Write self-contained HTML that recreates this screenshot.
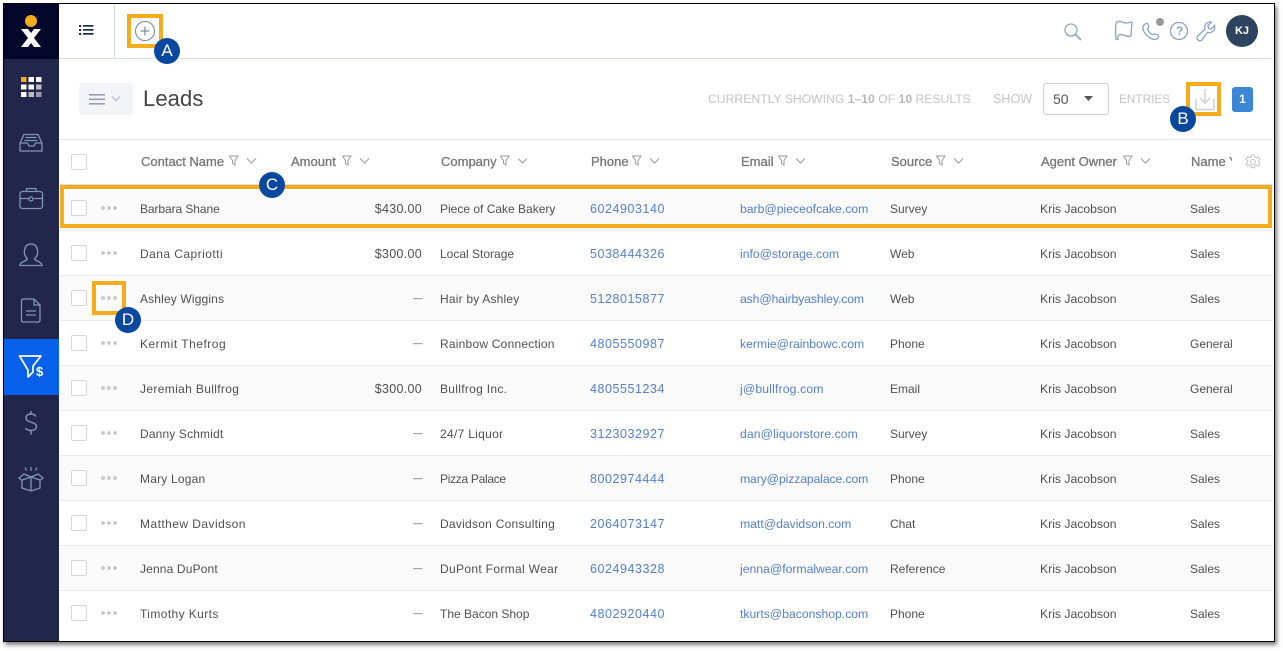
<!DOCTYPE html>
<html><head><meta charset="utf-8"><style>
html,body{margin:0;padding:0;background:#fff;width:1283px;height:651px;overflow:hidden}
body{position:relative;font-family:"Liberation Sans",sans-serif;color:#444}
div,span,svg{position:absolute}
#frame{left:3px;top:3px;width:1270px;height:637px;border:1px solid #000;box-shadow:2px 3px 4px rgba(0,0,0,.5);background:#fff;box-sizing:content-box}
.r{left:0;width:1283px;height:16px}
.r span{font-size:12px;white-space:nowrap;line-height:16px;color:#505050;top:0}
.r .n{left:140px}
.r .m{right:861px;font-size:12.500px;letter-spacing:.3px}
.r .d{left:413px;font-size:9.500px;color:#555}
.r .c{left:440px}
.r .p{left:590px;color:#5480cc;font-size:12.500px;letter-spacing:.55px}
.r .e{left:740px;color:#5480cc;font-size:12.200px}
.r .s{left:890px}
.r .o{left:1040px;font-size:12.200px}
.r .k{left:1190px}
.h{font-size:13px;color:#777;-webkit-text-stroke:.3px #777;white-space:nowrap;line-height:16px;top:154px}
.cb{width:14px;height:14px;border:1px solid #d6d6d6;border-radius:2px;background:#fff;left:71px}
.dots{left:101px;width:16px;height:4px;background:radial-gradient(circle at 2px 2px,#cacaca 1.800px,transparent 2px) 0 0/6px 4px repeat-x}
.row{left:59px;width:1214px;height:44px;border-bottom:1px solid #ebebeb}
.g{background:#fafafa}
.badge{width:26px;height:26px;border-radius:50%;background:#0a479f;color:#fff;font-size:17px;line-height:26px;text-align:center}
.y{border:4px solid #f4ab1c;box-sizing:border-box}
.mut{color:#c4c4c4;white-space:nowrap;line-height:16px}
.fl{top:155px;width:30px;height:12px}
</style></head><body>
<div id="frame"></div>
<!-- sidebar -->
<div style="left:4px;top:4px;width:55px;height:637px;background:#22264a"></div>
<div style="left:4px;top:4px;width:55px;height:55px;background:#03052b"></div>
<div style="left:4px;top:339px;width:55px;height:56px;background:#0760ea"></div>
<svg style="left:4px;top:4px" width="55" height="637" viewBox="4 4 55 637" fill="none">
<circle cx="31" cy="21" r="6" fill="#f4ab1c"/>
<path d="M21 29h7l3 4 3-4h7l-7 9 7 9h-7l-3-4-3 4h-7l7-9z" fill="#fff"/>
<g>
<rect x="21" y="77" width="5.500" height="5" fill="#f4ab1c"/><rect x="28.500" y="77" width="5.500" height="5" fill="#fff"/><rect x="36" y="77" width="5.500" height="5" fill="#fff"/>
<rect x="21" y="84.500" width="5.500" height="5" fill="#fff"/><rect x="28.500" y="84.500" width="5.500" height="5" fill="#fff"/><rect x="36" y="84.500" width="5.500" height="5" fill="#bdbdc8"/>
<rect x="21" y="92" width="5.500" height="5" fill="#fff"/><rect x="28.500" y="92" width="5.500" height="5" fill="#bdbdc8"/><rect x="36" y="92" width="5.500" height="5" fill="#9a9aa8"/>
</g>
<g stroke="#7f95b8" stroke-width="1.300">
<path d="M20 143l4-8.500h14l4 8.500v8H20zM20 143h7.500l1.500 3h5l1.500-3H42"/><path d="M25.500 137.500h11M24.500 140.500h13"/>
<rect x="20" y="191.500" width="22.500" height="17" rx="2.500"/><path d="M26.500 191.500v-3h9.500v3M20 198.500h8.500M34 198.500h8.500"/><circle cx="31" cy="199" r="2"/>
<path d="M20 265.500c0-4 6-4 7.500-6.500-3-3-3.500-6-3-9 .7-4 3-6 6.500-6s5.800 2 6.500 6c.5 3 0 6-3 9 1.500 2.500 7.500 2.500 7.500 6.500z"/>
<path d="M23 299h11l6 6v15.500a1.500 1.500 0 0 1-1.500 1.500h-15.500a1.500 1.500 0 0 1-1.500-1.500v-20a1.500 1.500 0 0 1 1.500-1.500zM34 299v6h6M26 311h10M26 315h10"/>
<path d="M36 416.500c-1-1.500-3-2.500-5-2.500-3 0-5 1.500-5 4s2 3.500 5 4.200 5.500 1.800 5.500 4.300-2.500 4-5.500 4c-2.300 0-4.500-1-5.500-2.500M31 411v3M31 431v3.500" stroke-width="1.500"/>
<path d="M24 474l7 3 7-3 5 4-3 2.500v7.500l-9 3-9-3v-7.500l-3-2.500zM31 477v13.500M22 480l9-3 9 3M25 467.500l1.500 3M31 467v4M37 467.500l-1.500 3"/>
</g>
<path d="M19.500 356h21.500l-8 10v6l-5 5v-7z" stroke="#fff" stroke-width="1.700" stroke-linejoin="round"/>
</svg>
<span style="left:36px;top:365px;font-size:13px;font-weight:bold;color:#fff;line-height:14px">$</span>
<!-- top bar -->
<div style="left:59px;top:58px;width:1214px;height:1px;background:#d5dfec"></div>
<div style="left:114px;top:4px;width:1px;height:55px;background:#d5dfec"></div>
<svg style="left:79px;top:24px" width="16" height="12" fill="#1f2a4a"><rect x="0" y="1" width="2.200" height="2"/><rect x="0" y="5" width="2.200" height="2"/><rect x="0" y="9" width="2.200" height="2"/><rect x="4" y="1" width="10.500" height="1.700"/><rect x="4" y="5" width="10.500" height="1.700"/><rect x="4" y="9" width="10.500" height="1.700"/></svg>
<div class="y" style="left:127px;top:14px;width:36px;height:34px"></div>
<svg style="left:134px;top:20px" width="22" height="22" fill="none" stroke="#7a8aa5" stroke-width="1.100"><circle cx="11" cy="11" r="9.500"/><path d="M11 6.500v9M6.500 11h9" stroke-width="1.300"/></svg>
<div class="badge" style="left:154px;top:38px">A</div>
<svg style="left:1060px;top:18px" width="210" height="30" fill="none" stroke="#8ca4c4" stroke-width="1.300">
<circle cx="11" cy="12" r="6"/><path d="M15.500 16.500l5.500 5.500" stroke-width="1.700"/>
<path d="M57 4c4-2 5 1 9 1 2.500 0 5-1 6-1l-1 14c-3 1-5 0-8-1-2-.7-4-.5-5 1v3.500h-2c-.5-5.500-.5-12 0-16z"/>
<path transform="translate(-18 0)" d="M103 6c2-1.500 3-.5 3.500 1.500.5 1.500 0 2.500-1 3.300.8 2.700 3 4.900 5.500 6 1-.8 2-1.200 3.500-.5 1.800.8 3 2 1.500 3.700-2 2-4.500 2-7.500.2-3.500-2-6.500-5.500-7.500-9-.5-2 .2-3.700 2-5.200z"/>
<circle cx="119" cy="13" r="8.500"/>
<path transform="translate(-5 0)" d="M147 22c-1.500 1-3.500 1-4.500-.5-.7-1.500-.5-3 .8-4l6.700-6.500c-.7-3 .5-5.500 3-6.700 1.200-.5 2.500-.5 3.500-.2l-3.500 3.300.5 3 3 .5 3-3.500c.7 2.200 0 4.500-1.700 6-1.700 1.300-3.500 1.700-5.300 1z"/>
</svg>
<span style="left:1176px;top:23px;font-size:12px;font-weight:bold;color:#8ca4c4;line-height:16px">?</span>
<div style="left:1156px;top:18px;width:8px;height:8px;border-radius:50%;background:#9a9a9a"></div>
<div style="left:1226px;top:15px;width:32px;height:32px;border-radius:50%;background:#2e435f;color:#fff;font-size:11px;font-weight:bold;line-height:32px;text-align:center">KJ</div>
<!-- toolbar -->
<div style="left:79px;top:83px;width:54px;height:32px;border-radius:4px;background:#f2f4f8"></div>
<svg style="left:89px;top:92px" width="36" height="14"><path d="M0 2h16v1.600H0zM0 6.500h16v1.600H0zM0 11h16v1.600H0z" fill="#9a9db2"/><path d="M23 4.500l4 4 4-4" stroke="#c8ccd8" stroke-width="2" fill="none"/></svg>
<span style="left:143px;top:85px;font-size:22px;line-height:28px;color:#444;letter-spacing:.1px">Leads</span>
<span class="mut" style="left:708px;top:91px;font-size:12.200px">CURRENTLY SHOWING <b style="position:static;color:#b9b9b9">1–10</b> OF <b style="position:static;color:#b9b9b9">10</b> RESULTS</span>
<span class="mut" style="left:993px;top:91px;font-size:12.600px">SHOW</span>
<div style="left:1043px;top:83px;width:64px;height:30px;border:1px solid #cfcfcf;border-radius:3px;background:#fff"></div>
<span style="left:1053px;top:91px;font-size:14px;color:#555;line-height:16px">50</span>
<svg style="left:1084px;top:96px" width="10" height="6"><path d="M0 0h9L4.500 5z" fill="#555"/></svg>
<span class="mut" style="left:1119px;top:91px;font-size:11.800px">ENTRIES</span>
<div class="y" style="left:1186px;top:82px;width:35px;height:34px"></div>
<svg style="left:1194px;top:87px" width="22" height="25" fill="none" stroke="#cfcfcf" stroke-width="1.500"><path d="M11 2v14M6 11l5 5 5-5"/><path d="M2 12v9.500a1 1 0 0 0 1 1h16a1 1 0 0 0 1-1V12"/></svg>
<div class="badge" style="left:1170px;top:106px">B</div>
<div style="left:1232px;top:87px;width:21px;height:25px;border-radius:3px;background:#3c86d6;color:#fff;font-size:12px;font-weight:bold;line-height:25px;text-align:center">1</div>
<!-- header -->
<div style="left:59px;top:139px;width:1214px;height:1px;background:#e5e5e5"></div>
<div style="left:59px;top:184px;width:1214px;height:1px;background:#dedede"></div>
<div class="cb" style="top:154px"></div>
<span class="h" style="left:141px">Contact Name</span>
<span class="h" style="left:291px">Amount</span>
<span class="h" style="left:441px">Company</span>
<span class="h" style="left:591px">Phone</span>
<span class="h" style="left:741px">Email</span>
<span class="h" style="left:891px">Source</span>
<span class="h" style="left:1041px">Agent Owner</span>
<span class="h" style="left:1191px;width:41px;overflow:hidden">Name Y</span>
<svg width="0" height="0"><defs><g id="f" fill="none" stroke="#9a9a9a" stroke-width="1"><path d="M.5 1h8.500L6 5.500V10L3.500 8.500v-3z"/><path d="M18 3.500l4.500 4.500 4.500-4.500"/></g></defs></svg>
<svg class="fl" style="left:229px"><use href="#f"/></svg>
<svg class="fl" style="left:342px"><use href="#f"/></svg>
<svg class="fl" style="left:500px"><use href="#f"/></svg>
<svg class="fl" style="left:632px"><use href="#f"/></svg>
<svg class="fl" style="left:778px"><use href="#f"/></svg>
<svg class="fl" style="left:936px"><use href="#f"/></svg>
<svg class="fl" style="left:1123px"><use href="#f"/></svg>
<svg style="left:1245px;top:154px" width="16" height="16" fill="none" stroke="#c4c4c4" stroke-width="1"><circle cx="8" cy="8" r="2.500"/><path d="M6.500 1h3l.4 2 1.700.8 1.800-1 1.500 2.400-1.500 1.300v1.800l1.500 1.300-1.500 2.400-1.800-1-1.700.8-.4 2h-3l-.4-2-1.700-.8-1.800 1L1 9.800l1.500-1.300V6.700L1 5.200l1.500-2.400 1.800 1 1.700-.8z"/></svg>
<!-- rows -->
<div class="row g" style="top:185px;height:45px"></div>
<div class="row" style="top:231px"></div>
<div class="row g" style="top:276px"></div>
<div class="row" style="top:321px"></div>
<div class="row g" style="top:366px"></div>
<div class="row" style="top:411px"></div>
<div class="row g" style="top:456px"></div>
<div class="row" style="top:501px"></div>
<div class="row g" style="top:546px"></div>
<div class="cb" style="top:200px"></div><div class="cb" style="top:245px"></div><div class="cb" style="top:290px"></div><div class="cb" style="top:335px"></div><div class="cb" style="top:380px"></div><div class="cb" style="top:425px"></div><div class="cb" style="top:470px"></div><div class="cb" style="top:515px"></div><div class="cb" style="top:560px"></div><div class="cb" style="top:605px"></div>
<div class="dots" style="top:206px"></div><div class="dots" style="top:251px"></div><div class="dots" style="top:296px"></div><div class="dots" style="top:341px"></div><div class="dots" style="top:386px"></div><div class="dots" style="top:431px"></div><div class="dots" style="top:476px"></div><div class="dots" style="top:521px"></div><div class="dots" style="top:566px"></div><div class="dots" style="top:611px"></div>

<div class="r" style="top:201px"><span class="n" style="letter-spacing:-.08px">Barbara Shane</span><span class="m">$430.00</span><span class="c">Piece of Cake Bakery</span><span class="p">6024903140</span><span class="e">barb@pieceofcake.com</span><span class="s">Survey</span><span class="o">Kris Jacobson</span><span class="k">Sales</span></div>
<div class="r" style="top:246px"><span class="n" style="letter-spacing:.45px">Dana Capriotti</span><span class="m">$300.00</span><span class="c">Local Storage</span><span class="p">5038444326</span><span class="e">info@storage.com</span><span class="s">Web</span><span class="o">Kris Jacobson</span><span class="k">Sales</span></div>
<div class="r" style="top:291px"><span class="n" style="letter-spacing:.15px">Ashley Wiggins</span><span class="d">—</span><span class="c" style="letter-spacing:.2px">Hair by Ashley</span><span class="p">5128015877</span><span class="e" style="letter-spacing:-.1px">ash@hairbyashley.com</span><span class="s">Web</span><span class="o">Kris Jacobson</span><span class="k">Sales</span></div>
<div class="r" style="top:336px"><span class="n" style="letter-spacing:.5px">Kermit Thefrog</span><span class="d">—</span><span class="c" style="letter-spacing:.22px">Rainbow Connection</span><span class="p">4805550987</span><span class="e">kermie@rainbowc.com</span><span class="s">Phone</span><span class="o">Kris Jacobson</span><span class="k">General</span></div>
<div class="r" style="top:381px"><span class="n" style="letter-spacing:.35px">Jeremiah Bullfrog</span><span class="m">$300.00</span><span class="c" style="letter-spacing:.3px">Bullfrog Inc.</span><span class="p">4805551234</span><span class="e" style="letter-spacing:.15px">j@bullfrog.com</span><span class="s">Email</span><span class="o">Kris Jacobson</span><span class="k">General</span></div>
<div class="r" style="top:426px"><span class="n" style="letter-spacing:.15px">Danny Schmidt</span><span class="d">—</span><span class="c" style="letter-spacing:.3px">24/7 Liquor</span><span class="p">3123032927</span><span class="e" style="letter-spacing:.1px">dan@liquorstore.com</span><span class="s">Survey</span><span class="o">Kris Jacobson</span><span class="k">Sales</span></div>
<div class="r" style="top:471px"><span class="n" style="letter-spacing:.2px">Mary Logan</span><span class="d">—</span><span class="c" style="letter-spacing:-.3px">Pizza Palace</span><span class="p">8002974444</span><span class="e" style="letter-spacing:-.1px">mary@pizzapalace.com</span><span class="s">Phone</span><span class="o">Kris Jacobson</span><span class="k">Sales</span></div>
<div class="r" style="top:516px"><span class="n" style="letter-spacing:.45px">Matthew Davidson</span><span class="d">—</span><span class="c" style="letter-spacing:.26px">Davidson Consulting</span><span class="p">2064073147</span><span class="e">matt@davidson.com</span><span class="s">Chat</span><span class="o">Kris Jacobson</span><span class="k">Sales</span></div>
<div class="r" style="top:561px"><span class="n" style="letter-spacing:.15px">Jenna DuPont</span><span class="d">—</span><span class="c" style="letter-spacing:.33px">DuPont Formal Wear</span><span class="p">6024943328</span><span class="e">jenna@formalwear.com</span><span class="s">Reference</span><span class="o">Kris Jacobson</span><span class="k">Sales</span></div>
<div class="r" style="top:606px"><span class="n" style="letter-spacing:.4px">Timothy Kurts</span><span class="d">—</span><span class="c">The Bacon Shop</span><span class="p">4802920440</span><span class="e">tkurts@baconshop.com</span><span class="s">Phone</span><span class="o">Kris Jacobson</span><span class="k">Sales</span></div>
<!-- annotations -->
<div class="y" style="left:60px;top:185px;width:1212px;height:43px"></div>
<div class="badge" style="left:259px;top:172px">C</div>
<div class="y" style="left:92px;top:281px;width:34px;height:34px"></div>
<div class="badge" style="left:115px;top:307px">D</div>
</body></html>
